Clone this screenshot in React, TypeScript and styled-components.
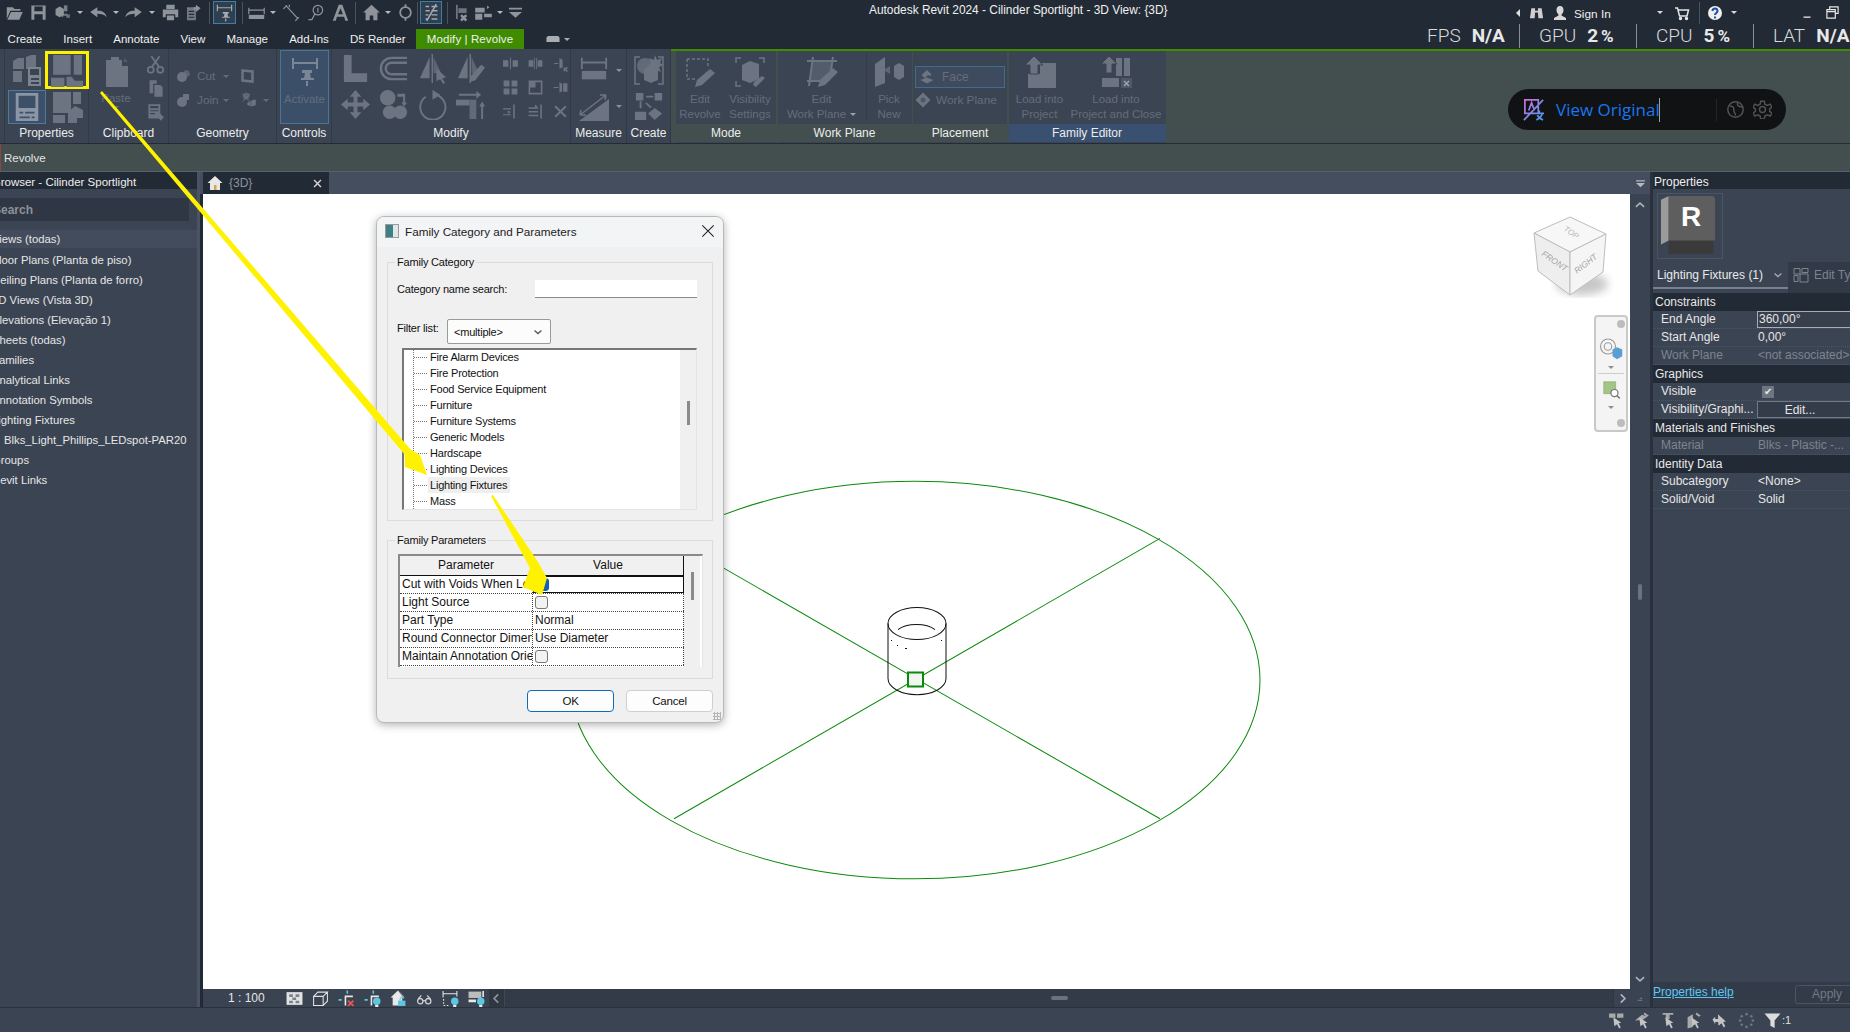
import React from 'react'
import styled, { createGlobalStyle } from 'styled-components'

const DARK = '#222a35'
const PANEL = '#3b4453'
const GREENISH = '#434f4f'
const GREEN = '#3f8c00'
const YELLOW = '#fff200'
const GREY = '#6c7481'
const UI = '"Liberation Sans", Arial, sans-serif'

const GlobalStyle = createGlobalStyle`
  html, body {
    margin: 0;
    padding: 0;
    height: 100%;
    overflow: hidden;
    background: ${PANEL};
    font-family: ${UI};
  }
  #root { height: 100%; }
  * { box-sizing: border-box; }
`

const Glyph = styled.svg<{ $s: number; $c?: string }>`
  width: ${p => p.$s}px;
  height: ${p => p.$s}px;
  flex: none;
  display: block;
  color: ${p => p.$c || GREY};
`

const ICONS: Record<string, React.ReactNode> = {
  open: <path fill="currentColor" d="M3 7h10l3 3h10v3H9L3 27zM10 15h20l-6 13H4z" />,
  save: <path fill="currentColor" fillRule="evenodd" d="M4 4h24v24H4zM9 6v8h14V6zM9 19v9h14v-9z" />,
  sync: <g fill="currentColor"><path d="M6 10l7-4 7 4v10l-7 4-7-4z" /><path d="M20 4h6v10h-6z" opacity=".8" /><path d="M16 24a7 7 0 0 1 12-4l2-2v7h-7l2-2a4 4 0 0 0-7 1z" opacity=".7" /></g>,
  undo: <path fill="currentColor" d="M14 7v6c9 0 14 3 16 11-4-5-9-6-16-6v6L2 15z" />,
  redo: <path fill="currentColor" d="M18 7v6C9 13 4 16 2 24c4-5 9-6 16-6v6l12-9z" />,
  print: <path fill="currentColor" fillRule="evenodd" d="M9 3h14v7H9zM3 11h26v13h-5v-5H8v5H3zM10 21h12v8H10z" />,
  exportDoc: <g fill="currentColor"><path fillRule="evenodd" d="M5 7h15v22H5zM8 13v2h9v-2zM8 18v2h9v-2zM8 23v2h9v-2z" opacity=".75" /><path d="M20 3l8 6-8 6v-4h-4V7h4z" /></g>,
  dimPin: <g fill="none" stroke="currentColor" strokeWidth="2"><path d="M4 3v11M28 3v11M4 8h24" /><path fill="currentColor" stroke="none" d="M13 15h10v3h-2l1 5h3v2H12v-2h3l1-5h-3zM17 26h2v5h-2z" /></g>,
  tape: <g fill="none" stroke="currentColor" strokeWidth="2"><path d="M3 8v11M29 8v11M3 12h26" /><path fill="currentColor" stroke="none" d="M3 20h26v7H3z" /></g>,
  aligned: <g fill="none" stroke="currentColor" strokeWidth="2"><path d="M8 4l20 22M4 10l6-6M24 30l6-6M14 3v4" /></g>,
  tag: <g fill="none" stroke="currentColor" strokeWidth="2"><circle cx="20" cy="12" r="8" /><path d="M4 28h6l5-10" /><path d="M20 8v8" /></g>,
  bigA: <path fill="currentColor" fillRule="evenodd" d="M13 3h6l10 27h-5l-2-7H10l-2 7H3zM16 9l-4 10h8z" />,
  home: <g fill="currentColor"><path d="M16 3L2 16h4v13h7v-8h6v8h7V16h4z" /></g>,
  section: <g fill="none" stroke="currentColor" strokeWidth="3"><circle cx="16" cy="16" r="9" /><path d="M16 2v5M16 25v5" /></g>,
  thinLines: <g fill="none" stroke="currentColor" strokeWidth="2.5"><path d="M6 6h6M6 13h7M6 20h5M6 27h5M16 6h10M16 13h10M16 20h10M16 27h10M24 2L8 30" /></g>,
  closeDocs: <g fill="currentColor"><path d="M5 3h3v24H5zM9 9h14v8H9z" opacity=".7" /><path d="M15 19l3 3 3-3 3 3-3 3 3 3-3 3-3-3-3 3-3-3 3-3-3-3z" /></g>,
  switchWin: <g fill="currentColor"><path d="M2 8h16v8H2zM2 18h12v10H2zM17 18h13v6H17z" /><path d="M22 4l4 3-4 3zM8 28l-4 3" /></g>,
  custom: <path fill="currentColor" d="M5 8h22v3H5zM5 15h22l-11 10z" />,
  ribbonMode: <path fill="currentColor" d="M4 9h24l3 4v10H1V13zM11 14h10v4H11z" />,
  binoculars: <path fill="currentColor" d="M5 7h8v5h6V7h8l3 21h-10l-1-12h-6l-1 12H2z" />,
  user: <path fill="currentColor" d="M16 2c5 0 7 4 7 8s-2 7-4 9v2l9 5v4H4v-4l9-5v-2c-2-2-4-5-4-9s2-8 7-8z" />,
  cart: <g fill="none" stroke="currentColor" strokeWidth="3"><path d="M2 6h5l4 16h15l3-12H9" /><circle cx="13" cy="27" r="2" fill="currentColor" /><circle cx="25" cy="27" r="2" fill="currentColor" /></g>,
  minimize: <path fill="currentColor" d="M8 24h16v3H8z" />,
  restore: <g fill="none" stroke="currentColor" strokeWidth="2.5"><path d="M10 9V4h18v14h-6" /><path d="M4 10h18v18H4zM4 14h18" /></g>,
  categoryCubes: <g fill="currentColor"><path d="M2 7l5-3h6v11H2z" /><path d="M15 3l5-2h5v14H15z" /><path d="M2 17h9v11H2z" /><path fillRule="evenodd" d="M17 13h13v19H17zM19 15v6h9v-6zM20 24h8v2h-8zM20 28h8v2h-8z" fill="#7c8490" /></g>,
  typeSheets: <g fill="currentColor"><path d="M3 1h17v19H3zM23 1h8v19h-8z" /><path d="M1 23h13v9H1zM16 22h5l3 4h8v6H16z" /></g>,
  propSheet: <g fill="#8a95a5"><path fillRule="evenodd" d="M4 1h24v30H4zM7 4v13h18V4zM8 21v2h16v-2zM8 26v2h16v-2z" /><path d="M12 19h2v6h-2zM19 24h2v6h-2z" /></g>,
  typeCube: <g fill="currentColor"><path d="M2 1h18v21H2zM22 1h8v12h-8zM2 24h12v8H2z" /><path d="M17 21l7-6 8 4v8h-6v6H17z" /></g>,
  paste: <g fill="currentColor"><path d="M6 5h5V2h8v3h3v6h6v21H6z" /><path d="M24 3l4 4h-4z" opacity=".5" /></g>,
  scissors: <g fill="none" stroke="currentColor" strokeWidth="3"><circle cx="8" cy="25" r="5" /><circle cx="24" cy="25" r="5" /><path d="M10 20L23 2M22 20L9 2" /></g>,
  copyDoc: <g fill="currentColor"><path d="M6 2h12v6h-6v16H6z" /><path d="M14 10h10l4 4v16H14z" /></g>,
  matchProp: <g fill="currentColor"><path fillRule="evenodd" d="M4 2h20v24H4zM7 5v4h14V5zM7 12v2h14v-2zM7 17v2h8v-2z" /><path d="M18 20l4-4 8 8-5 6z" /></g>,
  cutGeo: <g fill="currentColor"><circle cx="12" cy="18" r="10" /><path d="M18 4l8 2 2 8-6 4-8-6z" opacity=".7" /></g>,
  joinGeo: <g fill="currentColor"><circle cx="12" cy="20" r="10" /><path d="M14 4h12v12H14z" /></g>,
  frameBox: <g fill="none" stroke="currentColor" strokeWidth="5"><path d="M5 5l20 2v20L5 25z" /></g>,
  wallOpening: <g fill="currentColor"><circle cx="11" cy="9" r="6" opacity=".7" /><path d="M4 5l14 14M18 5L4 19" stroke="currentColor" strokeWidth="1.5" /><path d="M20 17l8-2v10l-8 3zM13 21l6-3v9l-6-2z" /></g>,
  align: <path fill="currentColor" d="M4 2h8v19h16v9H4z" />,
  offset: <g fill="none" stroke="currentColor" strokeWidth="2.5"><path d="M30 5H14a11 11 0 0 0 0 22h16M30 10H14a6 6 0 0 0 0 12h16" /></g>,
  mirrorPick: <g fill="currentColor"><path d="M13 4v22H3z" /><path d="M17 4l8 17h-8z" opacity=".7" /><path d="M15 1h1.5v30H15z" /><path d="M20 16l10 9-4 1 3 5-2 1-3-5-4 2z" /></g>,
  mirrorDraw: <g fill="currentColor"><path d="M13 4v22H3z" /><path d="M17 4l8 17h-8z" opacity=".7" /><path d="M15 1h1.5v30H15z" /><path d="M27 12l4 3-10 13-6 2 1-6z" /></g>,
  move: <path fill="currentColor" d="M16 1l6 7h-4v6h6v-4l7 6-7 6v-4h-6v6h4l-6 7-6-7h4v-6H8v4l-7-6 7-6v4h6V8h-4z" />,
  copyCircles: <g fill="currentColor"><circle cx="10" cy="9" r="8" /><circle cx="12" cy="24" r="7" /><circle cx="23" cy="24" r="7" /><path d="M20 5h8v9h2l-3 4-3-4h2V8h-6z" /></g>,
  rotate: <g fill="none" stroke="currentColor" strokeWidth="2"><path d="M19 6a13 13 0 1 1-10 2" /><path fill="currentColor" stroke="none" d="M16 1l8 5-8 5z" /></g>,
  trim: <g fill="currentColor"><path d="M1 11h14v6H1z" /><path d="M15 11h7v20h-7z" opacity=".8" /><path d="M4 5h18V2l5 4-5 4V7H4zM27 31V18h-2l3-5 3 5h-2v13z" /></g>,
  splitS: <path fill="currentColor" d="M2 10h10v12H2zM20 10h10v12H20zM15 5h2v22h-2z" />,
  splitGap: <path fill="currentColor" d="M3 10h9v12H3zM20 10h9v12h-9zM13 5h1.5v22H13zM17 5h1.5v22H17z" />,
  unpin: <g fill="currentColor"><path d="M4 15h8v2H4zM14 6l6 3v14l-6 3z" /><path d="M22 22l3 3 3-3 2 2-3 3 3 3-2 2-3-3-3 3z" /></g>,
  array: <path fill="currentColor" d="M3 3h11v11H3zM18 3h11v11H18zM3 18h11v11H3zM18 18h11v11H18z" />,
  scale: <path fill="currentColor" fillRule="evenodd" d="M3 3h26v26H3zM16 6v10H6v10h20V6z" />,
  pin: <path fill="currentColor" d="M3 15h9v2H3zM14 6l5 3v14l-5 3zM21 8h8v16h-8z" />,
  trimSplit: <path fill="currentColor" d="M2 10h15v2H2zM2 21h15v2H2zM21 3h3v26h-3zM11 14l6 3-6 3z" />,
  trimMany: <path fill="currentColor" d="M3 8h18v3H3zM3 15h18v3H3zM3 22h18v3H3zM25 3h3v26h-3zM15 3l5 3-5 3z" />,
  xMark: <path fill="none" stroke="currentColor" strokeWidth="4" d="M6 6l20 20M26 6L6 26" />,
  measure: <g fill="none" stroke="currentColor" strokeWidth="2"><path d="M3 3v12M29 3v12M3 8h26" /><path fill="currentColor" stroke="none" d="M3 17h26v9H3z" /></g>,
  slope: <g fill="currentColor"><path d="M1 31L31 9v22z" /><path d="M2 25L28 5M28 5l-6 0M28 5l-1 5M2 25l6 0M2 25l1-5" fill="none" stroke="currentColor" strokeWidth="1.5" /></g>,
  createBox: <g><path fill="none" stroke="currentColor" strokeWidth="1.5" d="M7 3H2v27h5M25 3h5v27h-5" /><circle cx="12" cy="12" r="8" fill="currentColor" opacity=".8" /><path fill="currentColor" d="M22 1l2 5 5-2-2 5 4 2-5 2 2 5-5-2-3 4-1-6-5-1 4-4-2-5 5 2z" /><path fill="currentColor" d="M11 15l7-3 7 3v11l-7 3-7-3z" /></g>,
  createFlow: <g fill="currentColor"><path d="M2 2h8v8H2zM22 2h8v8h-8zM13 5h7l-2-2 3 3-3 3 2-2h-7zM1 22h12v9H1zM22 18l8 6-8 7-7-7zM6 11h2v6l2-2-3 4-3-4 2 2zM13 12l6 5-2 1-5-5z" /></g>,
  editSketch: <g fill="currentColor"><path fill="none" stroke="currentColor" strokeDasharray="3 2" strokeWidth="1.5" d="M3 3h21v9M3 3v20h8" /><path d="M26 13l5 4-13 12-7 2 2-7z" /></g>,
  visibility: <g fill="currentColor"><path fill="none" stroke="currentColor" strokeWidth="1.5" d="M2 7V2h5M25 2h5v5M2 25v5h5" /><path d="M8 9l8-4 9 3v15l-9 4-8-3z" /><path d="M28 20l3 2-9 9-3-2 1-3z" /></g>,
  editPlane: <g><path fill="none" stroke="currentColor" strokeWidth="2" d="M7 1l-4 29M27 1l-3 20M1 5h30M1 25h16" /><path fill="currentColor" opacity=".5" d="M7 5h20l-3 20H3z" /><path fill="currentColor" d="M27 12l5 4-13 13-7 2 2-7z" /></g>,
  pickNew: <g fill="currentColor"><path d="M2 8l10-7v26L2 31z" /><path d="M12 13l5-3v8l-5-3z" opacity=".7" /><path d="M21 10l5-3 5 3v11l-5 3-5-3z" /></g>,
  faceSmall: <g fill="currentColor"><path d="M3 22l12-5 14 5-13 7z" /><path d="M5 12l11-10 9 9-3 3-4-2-6 6-3-2z" /></g>,
  workPlaneSmall: <g fill="currentColor"><path d="M16 1l15 15-15 15L1 16z" /><circle cx="16" cy="16" r="5" fill="#4f5867" /></g>,
  loadProject: <g fill="currentColor"><path d="M16 7h16v25H4V18h12z" /><path d="M10 0l9 9h-5v9H6V9H1z" stroke="#3b4453" /></g>,
  loadClose: <g fill="currentColor"><path d="M16 2h6v18H16zM24 2h6v18h-6z" /><path d="M2 22h17v9H2z" /><path d="M9 0l8 8h-5v9H6V8H1z" stroke="#3b4453" /><path fill="#4f5867" d="M21 22h11v10H21z" /><path stroke="#9aa2ad" strokeWidth="1.5" d="M24 25l5 5M29 25l-5 5" /></g>,
  editType: <g fill="none" stroke="currentColor" strokeWidth="2"><path d="M2 3h12v11H2zM2 17h8v12H2zM18 3h12v8H18zM14 14h16v16H14z" /></g>,
  tile: <g fill="currentColor"><path d="M1 4h30v24H1z" /><path fill="#7b828d" d="M6 8h7v5H6zM18 8h7v5h-7zM12 14h7v5h-7zM6 20h7v5H6zM18 20h7v5h-7z" /></g>,
  wireCube: <path fill="none" stroke="currentColor" strokeWidth="2" d="M3 12h18v17H3zM3 12l8-8h18L21 12M29 4v17l-8 8" />,
  pinOff: <g><path fill="none" stroke="#e8e8e8" strokeWidth="3" d="M14 29V12h14" /><path fill="#5cc8e0" d="M16 1h3v6h-3zM1 17h6v3H1z" /><path stroke="#ef5350" strokeWidth="3.5" d="M19 20l10 10M29 20L19 30" /></g>,
  pinBulb: <g><path fill="none" stroke="#e8e8e8" strokeWidth="3" d="M14 29V12h14" /><path fill="#5cc8e0" d="M16 1h3v6h-3zM1 17h6v3H1z" /><circle cx="24" cy="21" r="7" fill="#5cc8e0" /><path fill="#e8e8e8" d="M21 28h6v4h-6z" /></g>,
  homeLock: <g><path fill="#e8e8e8" d="M15 1L1 14h4v15h18V14h4z" /><path fill="#8e8e8e" d="M15 1l7 6 6 7h-4z" /><path fill="#5cc8e0" d="M15 20h14v10H15z" /><path fill="none" stroke="#5cc8e0" strokeWidth="2" d="M19 20v-3a3 3 0 0 1 6 0" /></g>,
  glasses: <g fill="none" stroke="#cfcfcf" strokeWidth="2.4"><circle cx="8" cy="21" r="5" /><circle cx="23" cy="21" r="5" /><path d="M13 20h5M4 17l6-7M27 17l-6-7" /></g>,
  dimBulb: <g><path fill="none" stroke="#e8e8e8" strokeWidth="2" d="M2 2v12M28 2v10M2 7h26" /><path fill="none" stroke="#e8e8e8" strokeWidth="2" strokeDasharray="3 3" d="M3 17v12h12" /><circle cx="24" cy="21" r="7" fill="#5cc8e0" /><path fill="#e8e8e8" d="M21 28h6v4h-6z" /></g>,
  tempBulb: <g><path fill="#bdbdbd" d="M1 3h24v12H1z" /><path fill="#e8e8e8" d="M1 18h14v5H1zM27 2h3v11h-3z" /><circle cx="24" cy="21" r="7" fill="#5cc8e0" /><path fill="#e8e8e8" d="M21 28h6v4h-6z" /></g>,
  selLinks: <g fill="#a9a9a9"><path d="M2 3h12v8H2zM17 3h12v8H17z" /><path d="M10 10l15 10-5 1 4 8-3 2-4-8-5 4z" fill="#c4c4c4" /></g>,
  selUnder: <g fill="#a9a9a9"><path d="M2 16L15 5l10 4-9 6zM20 1l8 6-4 2-6-5z" /><path d="M10 10l15 10-5 1 4 8-3 2-4-8-5 4z" fill="#c4c4c4" /></g>,
  selPinned: <g fill="#a9a9a9"><path d="M5 2h20v3H5zM11 5h7v8H11z" /><path d="M10 10l15 10-5 1 4 8-3 2-4-8-5 4z" fill="#c4c4c4" /></g>,
  selFace: <g fill="#a9a9a9"><path d="M3 10l10-6v24L3 31zM20 1l8 6-4 2-6-5z" /><path d="M10 10l15 10-5 1 4 8-3 2-4-8-5 4z" fill="#c4c4c4" /></g>,
  dragSel: <g fill="#c4c4c4"><path d="M1 14l5-5v4h6v-4h2v16h-2v-6H6v4z" /><path d="M11 4l15 14-5 1 4 8-3 2-4-8-5 4z" /></g>,
  background: <g fill="#6f7784"><circle cx="16" cy="4" r="2.5" /><circle cx="25" cy="8" r="2.5" /><circle cx="28" cy="16" r="2.5" /><circle cx="25" cy="24" r="2.5" /><circle cx="16" cy="28" r="2.5" /><circle cx="7" cy="24" r="2.5" /><circle cx="4" cy="16" r="2.5" /><circle cx="7" cy="8" r="2.5" /></g>,
  funnel: <path fill="#dcdcdc" d="M1 3h30L20 16v14l-8-4V16z" />,
  tabHome: <g><path fill="#e8e8e8" d="M16 2L1 16h5v14h20V16h5z" /><path fill="#d9a441" d="M14 20h5v10h-5z" /></g>,
  orbit: <g><circle cx="12" cy="14" r="10" fill="none" stroke="#9a9a9a" strokeWidth="1.5" /><circle cx="12" cy="14" r="5" fill="none" stroke="#9a9a9a" strokeWidth="1.5" /><path fill="#5a9fd4" d="M18 18l6-3 7 3v9l-7 4-6-4z" /></g>,
  regionZoom: <g><path fill="#a3c586" stroke="#7f9f63" d="M3 3h20v20H3z" /><circle cx="21" cy="22" r="6" fill="#fff" stroke="#777" strokeWidth="2" /><path stroke="#777" strokeWidth="2.5" d="M25 26l5 5" /></g>,
  help: <g><circle cx="16" cy="16" r="14" fill="#f0f0f0" /><path fill="none" stroke="#1f4fa8" strokeWidth="4" d="M11 12c0-7 10-7 10 0 0 4-5 4-5 8" /><path fill="#1f4fa8" d="M14 23h4v4h-4z" /></g>,
  chevUp: <path fill="none" stroke="currentColor" strokeWidth="4" d="M5 21l11-10 11 10" />,
  chevDown: <path fill="none" stroke="currentColor" strokeWidth="4" d="M5 11l11 10 11-10" />,
  chevLeft: <path fill="none" stroke="currentColor" strokeWidth="5" d="M21 4L9 16l12 12" />,
  chevRight: <path fill="none" stroke="currentColor" strokeWidth="5" d="M11 4l12 12-12 12" />,
  thinX: <path fill="none" stroke="currentColor" strokeWidth="2.4" d="M3 3l26 26M29 3L3 29" />,
  globe: <g fill="none" stroke="currentColor" strokeWidth="2.5"><circle cx="16" cy="16" r="13" /><path d="M6 10c5 0 8 2 7 6s3 5 3 10M20 4c-2 4 0 6 3 7s5 0 6 3" /></g>,
  gear: <g fill="none" stroke="currentColor" strokeWidth="2.5"><circle cx="16" cy="16" r="5" /><path d="M13 2h6l1 5 4 2 5-2 3 5-4 3v4l4 3-3 5-5-2-4 2-1 5h-6l-1-5-4-2-5 2-3-5 4-3v-4l-4-3 3-5 5 2 4-2z" /></g>,
}

const Ico = ({ n, s = 32, c }: { n: string; s?: number; c?: string }): JSX.Element => (
  <Glyph viewBox="0 0 32 32" $s={s} $c={c}>{ICONS[n]}</Glyph>
)

const Caret = styled.span<{ $c?: string; $mt?: number }>`
  display: block;
  width: 0;
  height: 0;
  flex: none;
  margin-top: ${p => p.$mt ?? 0}px;
  border-left: 3px solid transparent;
  border-right: 3px solid transparent;
  border-top: 3px solid ${p => p.$c || '#b5bac1'};
`
const CaretLeft = styled.span`
  display: block;
  width: 0;
  height: 0;
  flex: none;
  border-top: 4px solid transparent;
  border-bottom: 4px solid transparent;
  border-right: 4px solid #e0e0e0;
`

// title bar
const Window = styled.div`
  position: relative;
  width: 1850px;
  height: 1032px;
  display: flex;
  flex-direction: column;
  overflow: hidden;
  background: ${PANEL};
`
const TitleBar = styled.div`
  height: 49px;
  flex: none;
  display: flex;
  flex-direction: column;
  background: ${DARK};
  color: #e9e9e9;
`
const TopRow = styled.div`
  height: 25px;
  display: flex;
  align-items: center;
  flex: none;
`
const Qat = styled.div`
  width: 869px;
  padding-left: 2px;
  display: flex;
  align-items: center;
  flex: none;
`
const Slot = styled.div<{ $w: number; $active?: boolean }>`
  width: ${p => p.$w}px;
  height: 23px;
  flex: none;
  display: flex;
  align-items: center;
  justify-content: center;
  ${p => p.$active && 'background:#2f3f4f; outline:1px solid #3f7fa0; outline-offset:-1px;'}
`
const QatSep = styled.div<{ $w: number }>`
  width: ${p => p.$w}px;
  flex: none;
  height: 22px;
  display: flex;
  justify-content: center;
  &::before { content: ''; width: 1px; background: #4b5360; }
`
const AppTitle = styled.div`
  font-size: 11.9px;
  white-space: nowrap;
  color: #f0f0f0;
  margin-top: -6px;
`
const TopRight = styled.div`
  position: absolute;
  left: 1510px;
  top: 0;
  height: 25px;
  width: 340px;
  display: flex;
  align-items: center;
  font-size: 11.8px;
`
const SignIn = styled.span`
  width: 78px;
  flex: none;
  color: #efefef;
  margin-top: 2px;
`
const BottomRow = styled.div`
  height: 24px;
  display: flex;
  justify-content: space-between;
  align-items: flex-end;
`
const Tabs = styled.div`
  display: flex;
  height: 20px;
  margin-left: -3px;
`
const Tab = styled.div<{ $ctx?: boolean }>`
  padding: 0 10.6px;
  height: 20px;
  line-height: 20px;
  font-size: 11.5px;
  color: #f0f0f0;
  background: ${p => (p.$ctx ? GREEN : 'transparent')};
  white-space: nowrap;
  ${p => p.$ctx && 'letter-spacing: 0.1px;'}
`
const RibbonToggle = styled.div`
  display: flex;
  align-items: center;
  gap: 4px;
  margin-left: 22px;
  color: #a9adb3;
`
const Metrics = styled.div`
  width: 423px;
  height: 24px;
  display: flex;
  align-items: center;
  font-family: Roboto, "Liberation Sans", sans-serif;
  font-size: 19px;
  white-space: nowrap;
  color: #d9dadc;
  flex: none;
  margin-bottom: 1px;
`
const Metric = styled.div<{ $w: number }>`
  width: ${p => p.$w}px;
  flex: none;
  display: flex;
  justify-content: flex-start;
  gap: 11px;
  padding-left: 19px;
  border-right: 1.5px solid #8a8f96;
  height: 24px;
  line-height: 24px;
  font-weight: 300;
  &:first-child { padding-left: 0; }
  &:last-child { border: 0; }
  b { font-weight: 700; color: #e8e8e8; }
  small { font-size: 17px; font-weight: 700; margin-left: 3px; }
`

// ribbon
const Ribbon = styled.div`
  height: 95px;
  flex: none;
  display: flex;
  border-bottom: 1px solid #252b34;
`
const CoreTools = styled.div`
  width: 671px;
  flex: none;
  display: flex;
  background: ${PANEL};
`
const ContextTools = styled.div`
  flex: 1;
  display: flex;
  gap: 1.5px;
  padding-left: 5px;
  background: ${GREENISH};
  border-top: 2px solid ${GREEN};
`
const Panel = styled.div<{ $w: number; $core?: boolean }>`
  width: ${p => p.$w}px;
  flex: none;
  display: flex;
  flex-direction: column;
  background: ${PANEL};
  ${p => p.$core && 'border-right: 1px solid #333a47; padding-top: 1px;'}
`
const PanelBody = styled.div`
  flex: 1;
  display: flex;
  min-height: 0;
`
const PanelLabel = styled.div<{ $tone?: string }>`
  height: 18px;
  flex: none;
  margin-bottom: 1px;
  text-align: center;
  font-size: 12px;
  line-height: 18px;
  color: #ececec;
  white-space: nowrap;
  background: ${p => p.$tone || 'transparent'};
`
const ToolGrid = styled.div<{ $cols: string; $rows: string; $pad?: string }>`
  display: grid;
  grid-template-columns: ${p => p.$cols};
  grid-template-rows: ${p => p.$rows};
  padding: ${p => p.$pad || '0'};
  justify-items: center;
  align-items: center;
  flex: none;
`
const PickBox = styled.div`
  display: flex;
  align-items: center;
  justify-content: center;
  width: 38px;
  height: 34px;
  background: #3e5068;
  outline: 1px solid #4f7a9c;
  outline-offset: -1px;
`
const HiliteFrame = styled.div`
  width: 44px;
  height: 38px;
  display: flex;
  align-items: center;
  justify-content: center;
  border: 3px solid ${YELLOW};
  position: relative;
`
const BigTool = styled.div<{ $w: number; $blue?: boolean; $ml?: number }>`
  width: ${p => p.$w}px;
  height: 100%;
  flex: none;
  margin-left: ${p => p.$ml ?? 0}px;
  display: flex;
  flex-direction: column;
  align-items: center;
  padding-top: 5px;
  color: #656d7a;
  font-size: 11.5px;
  line-height: 15px;
  text-align: center;
  white-space: nowrap;
  ${p => p.$blue && `background:#3b4f68; outline:1px solid #4a7394; outline-offset:-1px;`}
`
const BigCaption = styled.div<{ $gap?: number }>`
  margin-top: ${p => p.$gap ?? 4}px;
  display: flex;
  flex-direction: column;
  align-items: center;
`
const InlineRow = styled.div`
  display: flex;
  align-items: center;
  gap: 4px;
`
const SmallRow = styled.div<{ $w?: number }>`
  display: flex;
  align-items: center;
  gap: 5px;
  color: #656d7a;
  font-size: 11.8px;
  white-space: nowrap;
  height: 24px;
  ${p => p.$w && `width:${p.$w}px;`}
`
const SmallLabel = styled.span`
  width: 21px;
  flex: none;
`
const SideIcon = styled.span`
  display: flex;
  margin-left: 6px;
`
const Column = styled.div<{ $w?: number; $pad?: string }>`
  display: flex;
  flex-direction: column;
  flex: none;
  padding: ${p => p.$pad || '0'};
  ${p => p.$w && `width:${p.$w}px;`}
`
const VRule = styled.div`
  width: 1px;
  margin: 2px 0 2px 0;
  background: #333c49;
  flex: none;
`
const FaceBox = styled.div`
  height: 22px;
  display: flex;
  align-items: center;
  gap: 7px;
  padding-left: 4px;
  font-size: 12px;
  background: #3e4b5e;
  outline: 1px solid #3f6d8f;
  outline-offset: -1px;
  color: #656d7a;
`

// options bar
const OptionsBar = styled.div`
  height: 27px;
  flex: none;
  display: flex;
  align-items: center;
  padding-left: 3px;
  background: ${GREENISH};
  border-left: 1.5px solid #8c4444;
  color: #e4e4e4;
  font-size: 11.5px;
`

// workspace
const Workspace = styled.div`
  flex: 1;
  min-height: 0;
  display: flex;
  border-top: 1px solid #56606e;
`
const Browser = styled.aside`
  width: 200px;
  flex: none;
  display: flex;
  flex-direction: column;
  background: ${PANEL};
  border-right: 3px solid #4a5362;
  overflow: hidden;
`
const PaneHeader = styled.div<{ $shift?: number; $size?: number }>`
  height: 17px;
  line-height: 20px;
  flex: none;
  background: ${DARK};
  color: #eeeeee;
  font-size: ${p => p.$size ?? 12}px;
  white-space: nowrap;
  padding-left: 1px;
  text-indent: ${p => p.$shift ?? 0}px;
  overflow: hidden;
`
const SearchBox = styled.div`
  margin-top: 9px;
  width: 189px;
  height: 23px;
  flex: none;
  background: #2f3744;
  color: #8b919a;
  font-size: 12px;
  line-height: 24px;
  white-space: nowrap;
  text-indent: -7px;
  font-weight: 700;
`
const Tree = styled.div`
  margin-top: 9px;
  display: flex;
  flex-direction: column;
`
const TreeRow = styled.div<{ $open?: boolean; $leaf?: boolean }>`
  height: 20px;
  line-height: 20px;
  font-size: 11.3px;
  color: #e6e6e6;
  white-space: nowrap;
  text-indent: ${p => (p.$leaf ? 4 : -8)}px;
  ${p => p.$open && 'background:#434c5c; height:18px; line-height:18px; margin-bottom:2px;'}
`
const Center = styled.main`
  flex: 1;
  min-width: 0;
  display: flex;
  flex-direction: column;
  background: ${DARK};
  border-right: 3px solid #2a313d;
  padding-left: 3px;
`
const DocStrip = styled.div`
  height: 22px;
  flex: none;
  margin-left: -3px;
  display: flex;
  align-items: stretch;
  justify-content: space-between;
  background: #454e5f;
`
const DocTab = styled.div`
  margin-left: 3px;
  width: 126px;
  display: flex;
  align-items: center;
  gap: 6px;
  padding: 0 6px 0 4px;
  background: ${DARK};
  color: #8d939b;
  font-size: 12px;
`
const TabClose = styled.span`
  margin-left: auto;
  display: flex;
`
const StripMenu = styled.div`
  width: 20px;
  display: flex;
  align-items: center;
  justify-content: center;
`
const ViewRow = styled.div`
  flex: 1;
  min-height: 0;
  display: flex;
`
const Canvas = styled.div`
  position: relative;
  flex: 1;
  background: #ffffff;
  overflow: hidden;
`
const ModelSvg = styled.svg`
  position: absolute;
  inset: 0;
  width: 100%;
  height: 100%;
`
const CubeSvg = styled.svg`
  position: absolute;
  top: 17px;
  right: 15px;
  width: 90px;
  height: 95px;
`
const NavBar = styled.div`
  position: absolute;
  top: 121px;
  right: 2px;
  width: 34px;
  height: 117px;
  background: #f4f4f4;
  border: 2px solid #c9c9c9;
  border-radius: 4px;
  display: flex;
  flex-direction: column;
  align-items: center;
  padding: 19px 0 0 0;
`
const NavDivider = styled.div`
  width: 26px;
  height: 1px;
  margin: 4px 0 6px;
  background: #cdcdcd;
`
const NavKnob = styled.span<{ $top?: boolean }>`
  position: absolute;
  right: 1px;
  ${p => (p.$top ? 'top: 3px;' : 'bottom: 3px;')}
  width: 8px;
  height: 8px;
  border-radius: 50%;
  background: #bdbdbd;
`
const VScroll = styled.div`
  width: 20px;
  flex: none;
  display: flex;
  flex-direction: column;
  align-items: center;
  justify-content: space-between;
  background: #3a4351;
  padding: 5px 0 4px;
`
const ScrollMark = styled.div`
  width: 4px;
  height: 16px;
  border-radius: 2px;
  background: #6a7280;
`
const ViewBar = styled.div`
  height: 18px;
  flex: none;
  display: flex;
  align-items: center;
  background: #3a4351;
  color: #e6e6e6;
  font-size: 12px;
`
const ScaleLabel = styled.span`
  width: 78px;
  flex: none;
  padding-left: 25px;
  white-space: nowrap;
`
const ViewTool = styled.div`
  width: 26px;
  flex: none;
  display: flex;
  justify-content: center;
`
const ViewCollapse = styled.div`
  width: 16px;
  height: 18px;
  flex: none;
  display: flex;
  align-items: center;
  justify-content: center;
  background: #2f3743;
  border-right: 1px solid #3f4855;
`
const HTrack = styled.div`
  flex: 1;
  display: flex;
  justify-content: center;
  height: 18px;
  align-items: center;
  background: #333b48;
`
const HThumb = styled.div`
  width: 17px;
  height: 4px;
  border-radius: 2px;
  background: #6a7280;
`
const ScrollEnd = styled.div`
  width: 17px;
  height: 18px;
  flex: none;
  display: flex;
  justify-content: center;
  align-items: center;
  border-left: 1px solid #2f3743;
`
const ResizeDots = styled.div`
  width: 20px;
  height: 18px;
  flex: none;
  display: flex;
  align-items: flex-end;
  justify-content: center;
  padding-bottom: 3px;
  color: #8d939b;
  font-size: 8px;
  letter-spacing: 1px;
`

// properties
const Properties = styled.aside`
  width: 197px;
  flex: none;
  display: flex;
  flex-direction: column;
  overflow: hidden;
  background: ${PANEL};
  font-size: 12px;
`
const TypeImage = styled.div`
  margin: 4px 0 0 4px;
  width: 66px;
  height: 66px;
  flex: none;
  border: 1px solid #4a5464;
`
const RLogo = styled.div`
  height: 100%;
  position: relative;
  display: flex;
  justify-content: center;
  align-items: flex-start;
`
const RLetter = styled.span`
  position: absolute;
  top: 7px;
  left: 23px;
  font-family: "Liberation Sans", sans-serif;
  font-weight: 700;
  font-size: 28px;
  color: #ffffff;
`
const TypeSelector = styled.div`
  margin-top: 3px;
  height: 31px;
  flex: none;
  display: flex;
`
const TypeName = styled.div`
  width: 135px;
  flex: none;
  height: 27px;
  display: flex;
  align-items: center;
  justify-content: space-between;
  padding: 0 5px 0 4px;
  color: #e9e9e9;
  border-bottom: 2px solid #76808f;
  white-space: nowrap;
`
const EditType = styled.div`
  flex: 1;
  height: 31px;
  display: flex;
  align-items: center;
  gap: 5px;
  padding-left: 5px;
  background: #323a47;
  color: #7d8490;
  white-space: nowrap;
  padding-bottom: 5px;
`
const Group = styled.div`
  height: 18px;
  flex: none;
  line-height: 18px;
  padding-left: 2px;
  background: ${DARK};
  color: #e8e8e8;
  white-space: nowrap;
`
const PropRow = styled.div<{ $off?: boolean }>`
  height: 18px;
  flex: none;
  display: grid;
  grid-template-columns: 104px 1fr;
  line-height: 17px;
  color: ${p => (p.$off ? '#7d8490' : '#e6e6e6')};
  border-bottom: 1px dotted #4c5564;
`
const PropName = styled.div`
  padding-left: 8px;
  white-space: nowrap;
  overflow: hidden;
`
const PropValue = styled.div<{ $boxed?: boolean }>`
  white-space: nowrap;
  overflow: hidden;
  padding-left: 1px;
  ${p => p.$boxed && `border:1px solid #a8adb4; border-right:0; line-height:15px; background:#38404e;`}
`
const EditButton = styled.div`
  border: 1px solid #6f7a8a;
  border-right: 0;
  height: 17px;
  line-height: 16px;
  text-align: center;
  padding-right: 8px;
  background: #343c4a;
`
const CheckCell = styled.div`
  margin: 3px 0 0 4px;
  width: 12px;
  height: 12px;
  background: #6d7583;
  color: #e8e8e8;
  font-size: 10px;
  line-height: 12px;
  text-align: center;
`
const PropSpacer = styled.div`
  flex: 1;
`
const PropFooter = styled.div`
  height: 25px;
  flex: none;
  display: flex;
  align-items: center;
  justify-content: space-between;
  background: #333b48;
`
const HelpLink = styled.span`
  color: #59c8f5;
  text-decoration: underline;
  white-space: nowrap;
  margin-top: -5px;
`
const ApplyButton = styled.div`
  width: 70px;
  margin-right: -15px;
  height: 19px;
  border: 1px solid #4c5564;
  border-radius: 3px;
  color: #727a86;
  text-align: center;
  line-height: 17px;
  padding-right: 6px;
  font-size: 12px;
`
const StatusBar = styled.footer`
  height: 25px;
  flex: none;
  display: flex;
  align-items: center;
  justify-content: flex-end;
  padding-right: 55px;
  background: ${PANEL};
  border-top: 1px solid #2a313d;
  color: #e0e0e0;
  font-size: 11px;
`
const StatusTool = styled.div`
  width: 26px;
  flex: none;
  display: flex;
  justify-content: center;
`
const FilterCount = styled.span`
  margin-left: -3px;
  width: 13px;
`

// translate pill
const TranslatePill = styled.div`
  position: absolute;
  left: 1508px;
  top: 89px;
  width: 278px;
  height: 41px;
  border-radius: 21px;
  background: #111214;
  display: flex;
  align-items: center;
  padding-left: 14px;
  color: #1877ee;
  font-family: "Open Sans", sans-serif;
  font-size: 17px;
`
const PillText = styled.span`
  margin-left: 11px;
  width: 104px;
  flex: none;
  white-space: nowrap;
  border-right: 1px solid #9aa0a8;
  line-height: 24px;
`
const PillRule = styled.div`
  width: 1px;
  height: 22px;
  margin-left: 56px;
  background: #222427;
`
const PillIcons = styled.div`
  margin-left: 9px;
  display: flex;
  gap: 8px;
  color: #4e5052;
`

// dialog
const Dialog = styled.div`
  position: absolute;
  left: 376px;
  top: 216px;
  width: 348px;
  height: 507px;
  border-radius: 8px;
  background: #f0f0f0;
  border: 1px solid #b9b9b9;
  box-shadow: 0 2px 8px rgba(0, 0, 0, 0.3);
  display: flex;
  flex-direction: column;
  color: #111;
  font-size: 11px;
  letter-spacing: -0.2px;
  overflow: hidden;
`
const DialogTitle = styled.div`
  height: 30px;
  flex: none;
  background: #f3f4f6;
  display: flex;
  align-items: center;
  padding: 0 8px 2px 8px;
  gap: 6px;
  font-size: 11.7px;
  letter-spacing: 0;
  color: #222;
`
const DialogIcon = styled.div`
  width: 14px;
  height: 14px;
  flex: none;
  border: 1px solid #9a9a9a;
  background: linear-gradient(90deg, #3f7f86 0 60%, #dfe7ea 60%);
`
const DialogClose = styled.div`
  margin-left: auto;
  display: flex;
`
const DialogBody = styled.div`
  flex: 1;
  display: flex;
  flex-direction: column;
  padding: 15px 10px 0;
`
const FieldGroup = styled.div<{ $h: number; $mt?: number }>`
  position: relative;
  height: ${p => p.$h}px;
  margin-top: ${p => p.$mt ?? 0}px;
  flex: none;
  border: 1px solid #dcdcdc;
  display: flex;
  flex-direction: column;
`
const Legend = styled.span`
  position: absolute;
  left: 7px;
  top: -7px;
  padding: 0 2px;
  background: #f0f0f0;
  line-height: 13px;
`
const FieldRow = styled.div<{ $mt: number }>`
  margin-top: ${p => p.$mt}px;
  display: flex;
  align-items: center;
  padding-left: 9px;
  flex: none;
`
const FieldLabel = styled.span<{ $w: number; $lift?: number }>`
  width: ${p => p.$w}px;
  flex: none;
  white-space: nowrap;
  margin-top: -${p => p.$lift ?? 0}px;
`
const SearchField = styled.div`
  width: 162px;
  height: 18px;
  margin-top: 1px;
  background: #fff;
  border-bottom: 1px solid #8a8a8a;
`
const SelectField = styled.div`
  width: 104px;
  height: 25px;
  background: #fcfcfc;
  border: 1px solid #9a9a9a;
  border-radius: 2px;
  display: flex;
  align-items: center;
  justify-content: space-between;
  padding: 0 7px 0 6px;
`
const CategoryList = styled.div`
  margin: 4px 0 0 14px;
  width: 295px;
  height: 162px;
  flex: none;
  background: #fff;
  border: 1px solid #e4e4e4;
  border-top: 2px solid #777;
  border-left: 2px solid #777;
  display: flex;
  overflow: hidden;
`
const CategoryItems = styled.div`
  flex: 1;
  margin-left: 9px;
  border-left: 1px dotted #777;
  display: flex;
  flex-direction: column;
  padding-top: 0;
  margin-top: -1px;
`
const CategoryItem = styled.div<{ $on?: boolean }>`
  height: 16px;
  line-height: 16px;
  flex: none;
  display: flex;
  white-space: nowrap;
  &::before {
    content: '';
    width: 13px;
    margin-top: 8px;
    height: 0;
    border-top: 1px dotted #777;
    flex: none;
    margin-right: 4px;
  }
  span { padding: 0 3px 0 2px; margin-left: -3px; ${p => p.$on && 'background:#efefef;'} }
`
const ListScroll = styled.div<{ $top: number }>`
  width: 16px;
  flex: none;
  background: #f0f0f0;
  padding: ${p => p.$top}px 0 0 7px;
`
const ListThumb = styled.div<{ $h: number }>`
  width: 2.5px;
  height: ${p => p.$h}px;
  background: #8a8a8a;
`
const ParamTable = styled.div`
  margin: 13px 0 0 10px;
  width: 305px;
  height: 113px;
  flex: none;
  display: flex;
  background: #fff;
  border-top: 2px solid #8a8a8a;
  border-left: 2px solid #8a8a8a;
  border-right: 1px solid #e4e4e4;
  font-size: 12px;
  letter-spacing: 0;
  overflow: hidden;
`
const ParamGrid = styled.div`
  width: 284px;
  flex: none;
  display: flex;
  flex-direction: column;
`
const ParamHead = styled.div`
  height: 20px;
  flex: none;
  display: grid;
  grid-template-columns: 133px 151px;
  border-bottom: 1.5px solid #111;
  background: #f0f0f0;
`
const HeadCell = styled.div`
  text-align: center;
  line-height: 19px;
  border-right: 1px solid #111;
`
const ParamRow = styled.div`
  height: 18px;
  flex: none;
  display: grid;
  grid-template-columns: 133px 151px;
  border-bottom: 1px dotted #444;
`
const ParamName = styled.div`
  padding-left: 2px;
  line-height: 17px;
  white-space: nowrap;
  overflow: hidden;
  border-right: 1px dotted #444;
`
const ParamValue = styled.div<{ $sel?: boolean }>`
  padding-left: 2px;
  line-height: 17px;
  display: flex;
  align-items: center;
  border-right: 1px dotted #444;
  ${p => p.$sel && 'outline:1.5px solid #111; outline-offset:-1px; padding-left:3px;'}
`
const Check = styled.span<{ $on?: boolean }>`
  width: 13px;
  height: 13px;
  flex: none;
  border-radius: 3px;
  border: 1px solid ${p => (p.$on ? '#0f62b0' : '#777')};
  background: ${p => (p.$on ? '#0f62b0' : '#f2f2f2')};
`
const DialogButtons = styled.div`
  display: flex;
  justify-content: flex-end;
  gap: 12px;
  margin-top: 11px;
  flex: none;
  font-size: 11.5px;
`
const DialogButton = styled.div<{ $main?: boolean }>`
  width: 87px;
  height: 22px;
  line-height: 20px;
  text-align: center;
  background: #fdfdfd;
  border-radius: 4px;
  border: ${p => (p.$main ? '1.5px solid #0f6cbd' : '1px solid #cfcfcf')};
`
const Grip = styled.span`
  position: absolute;
  right: 2px;
  bottom: 2px;
  width: 8px;
  height: 8px;
  background-image: radial-gradient(#b5b5b5 1px, transparent 1.2px);
  background-size: 3px 3px;
`
const ArrowLayer = styled.svg`
  position: absolute;
  inset: 0;
  width: 1850px;
  height: 1032px;
  pointer-events: none;
`

const QAT_ITEMS: Array<[string, number, string?]> = [
  ['open', 24], ['save', 24], ['sync', 22], ['^', 16], ['undo', 20], ['^', 15], ['redo', 21], ['^', 15],
  ['print', 22], ['exportDoc', 24], ['|', 8], ['dimPin', 23, 'on'], ['|', 12], ['tape', 16], ['^', 18],
  ['aligned', 17], ['tag', 32], ['bigA', 18], ['|', 12], ['home', 20], ['^', 14], ['section', 20], ['|', 5],
  ['thinLines', 22, 'on'], ['|', 10], ['closeDocs', 20], ['switchWin', 22], ['^', 12], ['custom', 18],
]

const TREE_ITEMS: Array<[string, boolean?, boolean?]> = [
  ['Views (todas)', true],
  ['Floor Plans (Planta de piso)'],
  ['Ceiling Plans (Planta de forro)'],
  ['3D Views (Vista 3D)'],
  ['Elevations (Elevação 1)'],
  ['Sheets (todas)'],
  ['Families'],
  ['Analytical Links'],
  ['Annotation Symbols'],
  ['Lighting Fixtures'],
  ['Blks_Light_Phillips_LEDspot-PAR20', false, true],
  ['Groups'],
  ['Revit Links'],
]

const CATEGORIES = ['Fire Alarm Devices', 'Fire Protection', 'Food Service Equipment', 'Furniture', 'Furniture Systems', 'Generic Models', 'Hardscape', 'Lighting Devices', 'Lighting Fixtures', 'Mass']

const VIEW_TOOLS = ['tile', 'wireCube', 'pinOff', 'pinBulb', 'homeLock', 'glasses', 'dimBulb', 'tempBulb']
const STATUS_TOOLS = ['selLinks', 'selUnder', 'selPinned', 'selFace', 'dragSel', 'background', 'funnel']

const ModifyGrid = (): JSX.Element => (
  <>
    <ToolGrid $cols="38px 39px 38px 38px" $rows="36px 36px" $pad="0 0 0 4px">
      {['align', 'offset', 'mirrorPick', 'mirrorDraw', 'move', 'copyCircles', 'rotate', 'trim'].map(n => <Ico key={n} n={n} s={31} />)}
    </ToolGrid>
    <ToolGrid $cols="25px 25px 25px" $rows="24px 24px 24px" $pad="1px 0 0 9px">
      {['splitS', 'splitGap', 'unpin', 'array', 'scale', 'pin', 'trimSplit', 'trimMany', 'xMark'].map(n => <Ico key={n} n={n} s={17} />)}
    </ToolGrid>
  </>
)

const App = (): JSX.Element => (
  <Window>
    <GlobalStyle />
    <TitleBar>
      <TopRow>
        <Qat>
          {QAT_ITEMS.map(([n, w, on], i) => {
            if (n === '^') return <Slot key={i} $w={w}><Caret /></Slot>
            if (n === '|') return <QatSep key={i} $w={w} />
            return <Slot key={i} $w={w} $active={!!on}><Ico n={n} s={19} c={on ? '#a5abb3' : '#8f949b'} /></Slot>
          })}
        </Qat>
        <AppTitle>Autodesk Revit 2024 - Cilinder Sportlight - 3D View: {'{3D}'}</AppTitle>
        <TopRight>
          <Slot $w={16}><CaretLeft /></Slot>
          <Slot $w={20}><Ico n="binoculars" s={15} c="#cfcfcf" /></Slot>
          <Slot $w={28}><Ico n="user" s={16} c="#d8d8d8" /></Slot>
          <SignIn>Sign In</SignIn>
          <Slot $w={16}><Caret $c="#d8d8d8" /></Slot>
          <Slot $w={28}><Ico n="cart" s={16} c="#e4e4e4" /></Slot>
          <QatSep $w={6} />
          <Slot $w={26}><Ico n="help" s={16} c="#e4e4e4" /></Slot>
          <Slot $w={12}><Caret $c="#d8d8d8" /></Slot>
          <Slot $w={47} />
          <Slot $w={40}><Ico n="minimize" s={14} c="#e8e8e8" /></Slot>
          <Slot $w={10}><Ico n="restore" s={15} c="#e8e8e8" /></Slot>
        </TopRight>
      </TopRow>
      <BottomRow>
        <Tabs>
          <Tab>Create</Tab>
          <Tab>Insert</Tab>
          <Tab>Annotate</Tab>
          <Tab>View</Tab>
          <Tab>Manage</Tab>
          <Tab>Add-Ins</Tab>
          <Tab>D5 Render</Tab>
          <Tab $ctx>Modify | Revolve</Tab>
          <RibbonToggle><Ico n="ribbonMode" s={14} c="#a9adb3" /><Caret $c="#a9adb3" /></RibbonToggle>
        </Tabs>
        <Metrics>
          <Metric $w={93}>FPS <b>N/A</b></Metric>
          <Metric $w={117}>GPU <b>2<small>%</small></b></Metric>
          <Metric $w={117}>CPU <b>5<small>%</small></b></Metric>
          <Metric $w={96}>LAT <b>N/A</b></Metric>
        </Metrics>
      </BottomRow>
    </TitleBar>

    <Ribbon>
      <CoreTools>
        <Panel $w={5} $core />
        <Panel $w={84} $core>
          <PanelBody>
            <ToolGrid $cols="41px 39px" $rows="38px 36px" $pad="1px 0 0 1px">
              <Ico n="categoryCubes" s={32} />
              <HiliteFrame><Ico n="typeSheets" s={33} /></HiliteFrame>
              <PickBox><Ico n="propSheet" s={30} /></PickBox>
              <Ico n="typeCube" s={32} />
            </ToolGrid>
          </PanelBody>
          <PanelLabel>Properties</PanelLabel>
        </Panel>
        <Panel $w={80} $core>
          <PanelBody>
            <BigTool $w={54}>
              <Ico n="paste" s={32} />
              <BigCaption><span>Paste</span><Caret $c="#656d7a" /></BigCaption>
            </BigTool>
            <ToolGrid $cols="24px" $rows="24px 24px 24px" $pad="2px 0 0 0">
              <Ico n="scissors" s={19} />
              <Ico n="copyDoc" s={19} />
              <Ico n="matchProp" s={19} />
            </ToolGrid>
          </PanelBody>
          <PanelLabel>Clipboard</PanelLabel>
        </Panel>
        <Panel $w={108} $core>
          <PanelBody>
            <Column $pad="14px 0 0 7px">
              <SmallRow $w={96}><Ico n="cutGeo" s={16} /><SmallLabel>Cut</SmallLabel><Caret $c="#656d7a" /><SideIcon><Ico n="frameBox" s={16} /></SideIcon></SmallRow>
              <SmallRow $w={100}><Ico n="joinGeo" s={16} /><SmallLabel>Join</SmallLabel><Caret $c="#656d7a" /><SideIcon><Ico n="wallOpening" s={18} /></SideIcon><Caret $c="#656d7a" /></SmallRow>
            </Column>
          </PanelBody>
          <PanelLabel>Geometry</PanelLabel>
        </Panel>
        <Panel $w={55} $core>
          <PanelBody>
            <BigTool $w={49} $ml={3} $blue>
              <Ico n="dimPin" s={32} c="#7b8695" />
              <BigCaption $gap={5}><span>Activate</span></BigCaption>
            </BigTool>
          </PanelBody>
          <PanelLabel>Controls</PanelLabel>
        </Panel>
        <Panel $w={239} $core>
          <PanelBody><ModifyGrid /></PanelBody>
          <PanelLabel>Modify</PanelLabel>
        </Panel>
        <Panel $w={56} $core>
          <PanelBody>
            <ToolGrid $cols="36px 14px" $rows="36px 36px" $pad="2px 0 0 5px">
              <Ico n="measure" s={30} />
              <Caret $c="#8b919a" />
              <Ico n="slope" s={32} />
              <Caret $c="#8b919a" />
            </ToolGrid>
          </PanelBody>
          <PanelLabel>Measure</PanelLabel>
        </Panel>
        <Panel $w={44} $core>
          <PanelBody>
            <ToolGrid $cols="44px" $rows="36px 36px" $pad="2px 0 0 0">
              <Ico n="createBox" s={32} />
              <Ico n="createFlow" s={30} />
            </ToolGrid>
          </PanelBody>
          <PanelLabel>Create</PanelLabel>
        </Panel>
      </CoreTools>
      <ContextTools>
        <Panel $w={100}>
          <PanelBody>
            <BigTool $w={48}><Ico n="editSketch" s={32} /><BigCaption><span>Edit</span><span>Revolve</span></BigCaption></BigTool>
            <BigTool $w={52}><Ico n="visibility" s={32} /><BigCaption><span>Visibility</span><span>Settings</span></BigCaption></BigTool>
          </PanelBody>
          <PanelLabel $tone={GREENISH}>Mode</PanelLabel>
        </Panel>
        <Panel $w={134}>
          <PanelBody>
            <BigTool $w={88}><Ico n="editPlane" s={32} /><BigCaption><span>Edit</span><InlineRow>Work Plane<Caret $c="#9aa0a8" /></InlineRow></BigCaption></BigTool>
            <VRule />
            <BigTool $w={45}><Ico n="pickNew" s={32} /><BigCaption><span>Pick</span><span>New</span></BigCaption></BigTool>
          </PanelBody>
          <PanelLabel $tone={GREENISH}>Work Plane</PanelLabel>
        </Panel>
        <Panel $w={94}>
          <PanelBody>
            <Column $w={94} $pad="15px 2px 0">
              <FaceBox><Ico n="faceSmall" s={16} />Face</FaceBox>
              <SmallRow><Ico n="workPlaneSmall" s={16} />Work Plane</SmallRow>
            </Column>
          </PanelBody>
          <PanelLabel $tone={GREENISH}>Placement</PanelLabel>
        </Panel>
        <Panel $w={157}>
          <PanelBody>
            <BigTool $w={62}><Ico n="loadProject" s={32} /><BigCaption><span>Load into</span><span>Project</span></BigCaption></BigTool>
            <BigTool $w={91}><Ico n="loadClose" s={32} /><BigCaption><span>Load into</span><span>Project and Close</span></BigCaption></BigTool>
          </PanelBody>
          <PanelLabel $tone="#3a5070">Family Editor</PanelLabel>
        </Panel>
      </ContextTools>
    </Ribbon>

    <OptionsBar>Revolve</OptionsBar>

    <Workspace>
      <Browser>
        <PaneHeader $shift={-47} $size={11.5}>Project Browser - Cilinder Sportlight</PaneHeader>
        <SearchBox>Search</SearchBox>
        <Tree>
          {TREE_ITEMS.map(([label, open, leaf]) => <TreeRow key={label} $open={!!open} $leaf={!!leaf}>{label}</TreeRow>)}
        </Tree>
      </Browser>

      <Center>
        <DocStrip>
          <DocTab>
            <Ico n="tabHome" s={16} />
            {'{3D}'}
            <TabClose><Ico n="xMark" s={11} c="#d8d8d8" /></TabClose>
          </DocTab>
          <StripMenu><Ico n="custom" s={13} c="#b5bac1" /></StripMenu>
        </DocStrip>
        <ViewRow>
          <Canvas>
            <ModelSvg viewBox="203 195 1427 794" preserveAspectRatio="none">
              <g fill="none" stroke="#0a8a0a" strokeWidth="1">
                <ellipse cx="915" cy="680.5" rx="345" ry="198.5" />
                <path d="M672 539L1160 819M674 819L1160 539" />
              </g>
              <g fill="none" stroke="#111" strokeWidth="1">
                <ellipse cx="917" cy="624" rx="29" ry="16" />
                <path d="M898 630a22 11 0 0 1 37 0" />
                <path d="M888 624v55a29 16 0 0 0 58 0v-55" />
              </g>
              <path d="M891 641h1M897 646h1M905 649h2M941 641h1" stroke="#111" fill="none" />
              <path d="M908 673h15v14h-15z" fill="#f2f5f2" stroke="#0a8a0a" strokeWidth="2" />
            </ModelSvg>
            <CubeSvg viewBox="1525 212 90 95">
              <defs>
                <filter id="cubeBlur"><feGaussianBlur stdDeviation="4" /></filter>
              </defs>
              <ellipse cx="1582" cy="285" rx="26" ry="11" fill="#c8c8c8" filter="url(#cubeBlur)" />
              <path d="M1570 218L1606 235L1570 253L1534 234Z" fill="#f7f7f7" stroke="#bdbdbd" />
              <path d="M1534 234L1570 253L1570 296L1538 272Z" fill="#eeeeee" stroke="#bdbdbd" />
              <path d="M1570 253L1606 235L1603 273L1570 296Z" fill="#f5f5f5" stroke="#bdbdbd" />
              <text x="0" y="0" transform="translate(1563 231) rotate(35)" fontSize="8" fontStyle="italic" fill="#b9b9b9" fontFamily={UI}>TOP</text>
              <text x="0" y="0" transform="translate(1541 256) rotate(35)" fontSize="8.5" fontStyle="italic" fill="#a5a5a5" fontFamily={UI}>FRONT</text>
              <text x="0" y="0" transform="translate(1577 275) rotate(-38)" fontSize="8.5" fontStyle="italic" fill="#a5a5a5" fontFamily={UI}>RIGHT</text>
            </CubeSvg>
            <NavBar>
              <NavKnob $top />
              <Ico n="orbit" s={24} />
              <Caret $c="#8e8e8e" $mt={6} />
              <NavDivider />
              <Ico n="regionZoom" s={19} />
              <Caret $c="#8e8e8e" $mt={7} />
              <NavKnob />
            </NavBar>
          </Canvas>
          <VScroll>
            <Ico n="chevUp" s={12} c="#aeb3ba" />
            <ScrollMark />
            <Ico n="chevDown" s={12} c="#aeb3ba" />
          </VScroll>
        </ViewRow>
        <ViewBar>
          <ScaleLabel>1 : 100</ScaleLabel>
          {VIEW_TOOLS.map(n => <ViewTool key={n}><Ico n={n} s={17} c="#e2e2e2" /></ViewTool>)}
          <ViewCollapse><Ico n="chevLeft" s={11} c="#8d939b" /></ViewCollapse>
          <HTrack><HThumb /></HTrack>
          <ScrollEnd><Ico n="chevRight" s={11} c="#aeb3ba" /></ScrollEnd>
          <ResizeDots>⠴</ResizeDots>
        </ViewBar>
      </Center>

      <Properties>
        <PaneHeader>Properties</PaneHeader>
        <TypeImage>
          <RLogo>
            <Glyph viewBox="0 0 60 64" $s={62}>
              <path d="M8 40h46v22H8z" fill="#3a3a3a" />
              <path d="M0 6l8-4v46l-8 4z" fill="#9b9b9b" />
              <path d="M8 2h44a4 4 0 0 1 4 4v42H8z" fill="#5e5e5e" />
            </Glyph>
            <RLetter>R</RLetter>
          </RLogo>
        </TypeImage>
        <TypeSelector>
          <TypeName>Lighting Fixtures (1)<Ico n="chevDown" s={10} c="#a9adb3" /></TypeName>
          <EditType><Ico n="editType" s={16} c="#7d8490" />Edit Type</EditType>
        </TypeSelector>
        <Group>Constraints</Group>
        <PropRow><PropName>End Angle</PropName><PropValue $boxed>360,00°</PropValue></PropRow>
        <PropRow><PropName>Start Angle</PropName><PropValue>0,00°</PropValue></PropRow>
        <PropRow $off><PropName>Work Plane</PropName><PropValue>&lt;not associated&gt;</PropValue></PropRow>
        <Group>Graphics</Group>
        <PropRow><PropName>Visible</PropName><PropValue><CheckCell>✔</CheckCell></PropValue></PropRow>
        <PropRow><PropName>Visibility/Graphi...</PropName><EditButton>Edit...</EditButton></PropRow>
        <Group>Materials and Finishes</Group>
        <PropRow $off><PropName>Material</PropName><PropValue>Blks - Plastic -...</PropValue></PropRow>
        <Group>Identity Data</Group>
        <PropRow><PropName>Subcategory</PropName><PropValue>&lt;None&gt;</PropValue></PropRow>
        <PropRow><PropName>Solid/Void</PropName><PropValue>Solid</PropValue></PropRow>
        <PropSpacer />
        <PropFooter>
          <HelpLink>Properties help</HelpLink>
          <ApplyButton>Apply</ApplyButton>
        </PropFooter>
      </Properties>
    </Workspace>

    <StatusBar>
      {STATUS_TOOLS.map(n => <StatusTool key={n}><Ico n={n} s={17} /></StatusTool>)}
      <FilterCount>:1</FilterCount>
    </StatusBar>

    <TranslatePill>
      <Glyph viewBox="0 0 24 24" $s={23}>
        <defs>
          <linearGradient id="pillGrad" x1="0" y1="0" x2="1" y2="1">
            <stop offset="0" stopColor="#d86ad8" />
            <stop offset="1" stopColor="#3aa0f0" />
          </linearGradient>
        </defs>
        <g fill="none" stroke="url(#pillGrad)" strokeWidth="1.8">
          <path d="M3 2h14v14H3zM2 23L22 2M7 13l3-8 3 8M14 16h9M18 13v3M15 23c4-2 6-4 6-7M16 18c1 2 3 4 6 5" />
        </g>
      </Glyph>
      <PillText>View Original</PillText>
      <PillRule />
      <PillIcons>
        <Ico n="globe" s={19} c="#505254" />
        <Ico n="gear" s={19} c="#505254" />
      </PillIcons>
    </TranslatePill>

    <Dialog>
      <DialogTitle>
        <DialogIcon />
        Family Category and Parameters
        <DialogClose><Ico n="thinX" s={14} c="#222" /></DialogClose>
      </DialogTitle>
      <DialogBody>
        <FieldGroup $h={259}>
          <Legend>Family Category</Legend>
          <FieldRow $mt={16}>
            <FieldLabel $w={138}>Category name search:</FieldLabel>
            <SearchField />
          </FieldRow>
          <FieldRow $mt={21}>
            <FieldLabel $w={50} $lift={8}>Filter list:</FieldLabel>
            <SelectField><span>&lt;multiple&gt;</span><Ico n="chevDown" s={10} c="#555" /></SelectField>
          </FieldRow>
          <CategoryList>
            <CategoryItems>
              {CATEGORIES.map(c => <CategoryItem key={c} $on={c === 'Lighting Fixtures'}><span>{c}</span></CategoryItem>)}
            </CategoryItems>
            <ListScroll $top={51}><ListThumb $h={24} /></ListScroll>
          </CategoryList>
        </FieldGroup>
        <FieldGroup $h={139} $mt={19}>
          <Legend>Family Parameters</Legend>
          <ParamTable>
            <ParamGrid>
              <ParamHead>
                <HeadCell>Parameter</HeadCell>
                <HeadCell>Value</HeadCell>
              </ParamHead>
              <ParamRow><ParamName>Cut with Voids When Loaded</ParamName><ParamValue $sel><Check $on /></ParamValue></ParamRow>
              <ParamRow><ParamName>Light Source</ParamName><ParamValue><Check /></ParamValue></ParamRow>
              <ParamRow><ParamName>Part Type</ParamName><ParamValue>Normal</ParamValue></ParamRow>
              <ParamRow><ParamName>Round Connector Dimension</ParamName><ParamValue>Use Diameter</ParamValue></ParamRow>
              <ParamRow><ParamName>Maintain Annotation Orientation</ParamName><ParamValue><Check /></ParamValue></ParamRow>
            </ParamGrid>
            <ListScroll $top={16}><ListThumb $h={28} /></ListScroll>
          </ParamTable>
        </FieldGroup>
        <DialogButtons>
          <DialogButton $main>OK</DialogButton>
          <DialogButton>Cancel</DialogButton>
        </DialogButtons>
      </DialogBody>
      <Grip />
    </Dialog>

    <ArrowLayer viewBox="0 0 1850 1032">
      <polygon fill={YELLOW} points="100,93 102,91 410.6,449.4 420,455 427,475 405,467 404.6,454.6" />
      <polygon fill={YELLOW} points="491,496 493,495 538,562 547,578 542,595 523,587 530,568" />
    </ArrowLayer>
  </Window>
)

export default App
